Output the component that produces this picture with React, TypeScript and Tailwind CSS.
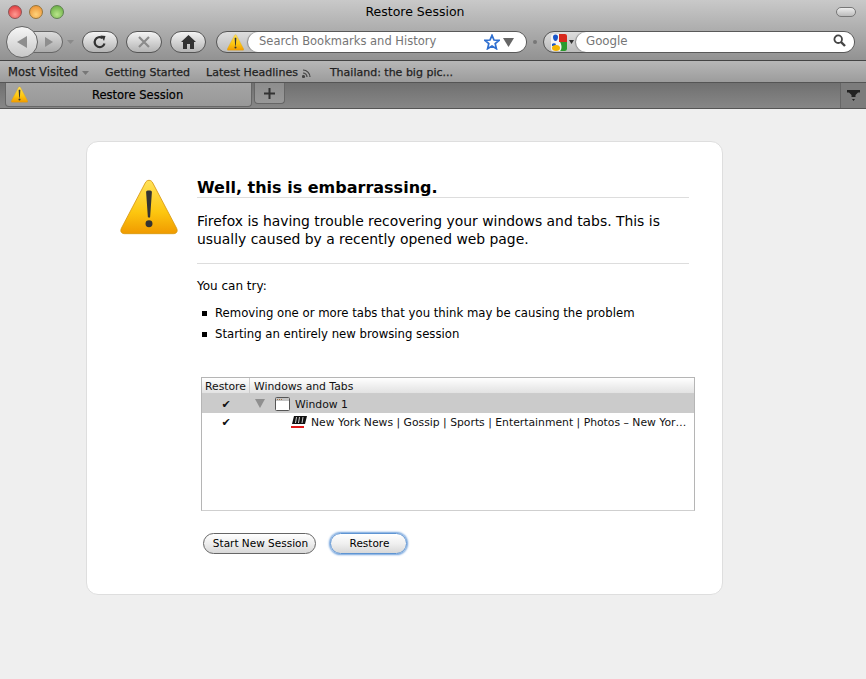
const font = "font-['DejaVu_Sans',sans-serif]";

const Warning = ({ size }: { size: number }) => (
  <svg width={size} height={size} viewBox="0 0 100 100" className="shrink-0">
    <defs>
      <linearGradient id={`warn${size}`} x1="0" y1="0" x2="0" y2="1">
        <stop offset="0" stopColor="#ffe25a" />
        <stop offset="0.6" stopColor="#fdc60f" />
        <stop offset="1" stopColor="#f09a00" />
      </linearGradient>
    </defs>
    <path
      d="M50 4c3 0 5 1.500 6.500 4.500l41 78c2.500 5 .5 9.500-5.500 9.500H8c-6 0-8-4.500-5.500-9.500l41-78C45 5.500 47 4 50 4z"
      fill={`url(#warn${size})`}
      stroke="#d99a10"
      strokeWidth="1.500"
    />
    <path d="M45 24c0-3 10-3 10 0l-3 43c0 2-4 2-4 0z" fill="#333" />
    <circle cx="50" cy="79" r="6" fill="#333" />
  </svg>
);

const ToolButton = ({ children }: { children: React.ReactNode }) => (
  <div className="flex h-[22px] w-9 items-center justify-center rounded-full border border-[#555] bg-gradient-to-b from-[#f4f4f4] to-[#b4b4b4]">
    {children}
  </div>
);

const Toolbar = () => (
  <div className="flex h-[61px] flex-col border-b border-[#444] bg-gradient-to-b from-[#c9c9c9] to-[#929292]">
    <div className="flex h-[24px] items-center pl-2 pr-[10px]">
      <div className="flex gap-[7px]">
        <span className="size-[14px] rounded-full border border-[#8c5555] bg-[radial-gradient(circle_at_50%_70%,#ff9a92,#dc2a2e)]" />
        <span className="size-[14px] rounded-full border border-[#96763c] bg-[radial-gradient(circle_at_50%_70%,#ffd27a,#e8892a)]" />
        <span className="size-[14px] rounded-full border border-[#5f8150] bg-[radial-gradient(circle_at_50%_70%,#b9e58a,#5da63a)]" />
      </div>
      <div className="flex-1 pr-[70px] pt-px text-center text-[12.500px] text-black">Restore Session</div>
      <div className="h-[10px] w-5 rounded-full border border-[#777] bg-gradient-to-b from-[#eee] to-[#bbb]" />
    </div>
    <div className="flex items-center pl-[6px] pt-[2px]">
      <div className="relative z-10 flex size-[32px] items-center justify-center rounded-full border border-[#666] bg-gradient-to-b from-[#f6f6f6] to-[#c8c8c8]">
        <svg width="14" height="14" viewBox="0 0 14 14"><path d="M2 7l10-6v12z" fill="#8e8e8e" /></svg>
      </div>
      <div className="-ml-2 flex h-[22px] w-[33px] items-center justify-center rounded-r-full border border-[#666] bg-gradient-to-b from-[#dcdcdc] to-[#aaa] pl-1">
        <svg width="10" height="10" viewBox="0 0 10 10"><path d="M1 0l8 5-8 5z" fill="#8e8e8e" /></svg>
      </div>
      <svg width="8" height="4" viewBox="0 0 8 4" className="ml-[4px] mr-[7px]"><path d="M0 0h7l-3.500 4z" fill="#8a8a8a" /></svg>
      <div className="flex gap-2">
        <ToolButton>
          <svg width="14" height="14" viewBox="0 0 14 14" fill="none">
            <path d="M11.500 8.500A5 5 0 1 1 9.500 3" stroke="#333" strokeWidth="2.200" />
            <path d="M7.500 .5l5 .5-1.500 5z" fill="#333" />
          </svg>
        </ToolButton>
        <ToolButton>
          <svg width="12" height="12" viewBox="0 0 12 12"><path d="M1 1l10 10M11 1L1 11" stroke="#8b8b8b" strokeWidth="2.200" /></svg>
        </ToolButton>
        <ToolButton>
          <svg width="15" height="14" viewBox="0 0 15 14"><path d="M7.500 0L15 7h-2v7H9V9H6v5H2V7H0z" fill="#333" /></svg>
        </ToolButton>
      </div>
      <div className="ml-[10px] flex h-[22px] w-[311px] items-center rounded-full border border-[#555] bg-gradient-to-b from-[#dedede] to-[#bcbcbc]">
        <div className="flex w-[31px] justify-end pr-[4px]"><Warning size={17} /></div>
        <div className="flex h-full flex-1 items-center rounded-full bg-white pl-[11px] pr-3 shadow-[-1px_0_1px_#888]">
          <span className="flex-1 text-[11.500px] text-[#757575]">Search Bookmarks and History</span>
          <svg width="16" height="16" viewBox="0 0 24 24" fill="#fff" stroke="#2f6fd0" strokeWidth="2.600"><path d="M12 2l3 7 7.500.6-5.700 4.900 1.800 7.500L12 18l-6.600 4 1.800-7.500L1.500 9.600 9 9z" /></svg>
          <svg width="11" height="9" viewBox="0 0 11 9" className="ml-[3px]"><path d="M0 0h11L5.500 9z" fill="#666" /></svg>
        </div>
      </div>
      <span className="mx-[6px] size-[4px] rounded-full bg-[#777]" />
      <div className="flex h-[22px] w-[312px] items-center rounded-full border border-[#555] bg-gradient-to-b from-[#dedede] to-[#bcbcbc]">
        <div className="flex w-[32px] items-center pl-[7px]">
          <svg width="16" height="17" viewBox="0 0 16 17">
            <rect width="16" height="17" rx="2" fill="#f4f4f4" />
            <path d="M2 3a2.500 2.500 0 0 1 5 0c0 2-1 4-2.500 4S2 5 2 3z" fill="#1a55c8" />
            <path d="M1 10c1-1 3-1 4 0l-1 2H1z" fill="#1a55c8" />
            <path d="M8 0h6a2 2 0 0 1 2 2v6H8z" fill="#d8281c" />
            <path d="M9 8h7v7a2 2 0 0 1-2 2H9c2-2 2-6 0-9z" fill="#2c9a2e" />
            <ellipse cx="5" cy="14" rx="4" ry="3" fill="#f4b400" />
          </svg>
          <svg width="5" height="4" viewBox="0 0 5 4" className="ml-[2px]"><path d="M0 0h5L2.500 4z" fill="#333" /></svg>
        </div>
        <div className="flex h-full flex-1 items-center rounded-full bg-white pl-[10px] pr-2 shadow-[-1px_0_1px_#888]">
          <span className="flex-1 text-[11.800px] text-[#757575]">Google</span>
          <svg width="13" height="13" viewBox="0 0 13 13" fill="none" stroke="#444" className="-mt-[3px]"><circle cx="5.200" cy="5.200" r="3.800" strokeWidth="1.800" /><path d="M8 8l4 4" strokeWidth="2.400" /></svg>
        </div>
      </div>
    </div>
  </div>
);

const BookmarksBar = () => (
  <div className="flex h-[22px] items-center border-b border-[#555] bg-gradient-to-b from-[#b7b7b7] to-[#9c9c9c] pl-2 pt-[3px] text-[11px] font-medium text-[#222]">
    <span className="flex items-center gap-1 text-[11.500px] [-webkit-text-stroke:0.25px_#222]">
      Most Visited
      <svg width="7" height="4" viewBox="0 0 7 4"><path d="M0 0h7L3.500 4z" fill="#777" /></svg>
    </span>
    <span className="ml-[16px] [-webkit-text-stroke:0.25px_#222]">Getting Started</span>
    <span className="ml-[16px] flex items-center gap-1 [-webkit-text-stroke:0.25px_#222]">
      Latest Headlines
      <svg width="9" height="9" viewBox="0 0 9 9" fill="none" stroke="#444" strokeWidth="1.200"><path d="M1 1a7 7 0 0 1 7 7M1 4a4 4 0 0 1 4 4" /><circle cx="1.500" cy="7.500" r="1" fill="#444" /></svg>
    </span>
    <span className="ml-[19px] [-webkit-text-stroke:0.25px_#222]">Thailand: the big pic...</span>
  </div>
);

const TabStrip = () => (
  <div className="flex h-[26px] border-b border-[#555] bg-gradient-to-b from-[#707070] to-[#878787]">
    <div className="ml-[5px] flex h-[24px] w-[247px] items-center rounded-b-[4px] border border-t-0 border-[#666] bg-gradient-to-b from-[#a5a5a5] to-[#989898] pl-[5px]">
      <Warning size={17} />
      <span className="ml-[64px] pt-[3px] text-[11.500px] text-black [-webkit-text-stroke:0.2px_#000]">Restore Session</span>
    </div>
    <div className="ml-[2px] flex h-[21px] w-[31px] items-center justify-center rounded-b-[4px] border border-t-0 border-[#666] bg-gradient-to-b from-[#8d8d8d] to-[#989898]">
      <svg width="11" height="11" viewBox="0 0 11 11"><path d="M5.500 0v11M0 5.500h11" stroke="#333" strokeWidth="2" /></svg>
    </div>
    <div className="ml-auto flex w-[26px] justify-center border-l border-[#666] bg-[#7c7c7c] pt-[7px]">
      <svg width="13" height="11" viewBox="0 0 13 11"><path d="M0 0h13v2.500h-2L8.500 5v2h-4V5L2 2.500H0z" fill="#222" /><path d="M5 9h3l-1.500 2z" fill="#222" /></svg>
    </div>
  </div>
);

const SessionTable = () => (
  <div className="ml-[4px] mt-[35px] h-[134px] w-[494px] border border-[#b5b5b5] border-b-[#cfcfcf] bg-white text-[10.800px] text-[#111]">
    <div className="flex h-[16px] items-center border-b border-[#ccc] bg-gradient-to-b from-[#fff] via-[#f0f0f0] to-[#e2e2e2]">
      <div className="flex h-full w-[48px] items-center border-r border-[#ccc] pl-[3px] pt-[3px]">Restore</div>
      <div className="pl-[4px] pt-[3px]">Windows and Tabs</div>
    </div>
    <div className="flex h-[19px] items-center bg-[#cbcbcb]">
      <div className="w-[48px] pt-[3px] text-center text-[11px] font-bold">✔</div>
      <svg width="10" height="9" viewBox="0 0 10 9" className="ml-[5px]"><path d="M0 0h10L5 9z" fill="#8f8f8f" /></svg>
      <svg width="15" height="14" viewBox="0 0 15 14" className="ml-[10px]">
        <rect x=".5" y=".5" width="14" height="13" rx="1" fill="#fff" stroke="#555" />
        <rect x="1" y="1" width="13" height="3" fill="#c4c4c4" />
        <path d="M2 2.500h1M4 2.500h1M6 2.500h1" stroke="#a07040" />
      </svg>
      <span className="ml-[5px] pt-[4px]">Window 1</span>
    </div>
    <div className="flex h-[17px] items-center">
      <div className="w-[48px] pt-[3px] text-center text-[11px] font-bold">✔</div>
      <svg width="16" height="13" viewBox="0 0 16 13" className="ml-[41px]">
        <path d="M3 1h13l-2 8H1z" fill="#111" />
        <path d="M5.500 2L4.500 8M8.500 2L7.500 8M12 2l-1 6" stroke="#fff" strokeWidth=".8" />
        <rect x="0" y="11" width="13" height="2" fill="#e01a1a" />
      </svg>
      <span className="ml-[4px] whitespace-nowrap pt-[4px]">New York News | Gossip | Sports | Entertainment | Photos – New Yor…</span>
    </div>
  </div>
);

export default function App() {
  return (
    <div className={`flex h-[679px] w-[866px] flex-col overflow-hidden bg-[#efefef] ${font}`}>
      <Toolbar />
      <BookmarksBar />
      <TabStrip />
      <div className="flex-1 pl-[86px] pt-[32px]">
        <div className="h-[454px] w-[637px] rounded-[12px] border border-[#dedede] bg-white pl-[33px] pt-[35px]">
          <div className="flex">
            <div className="w-[77px] pt-px"><Warning size={58} /></div>
            <div className="w-[492px] text-black">
              <h1 className="border-b border-[#ddd] pt-[2px] text-[16px] font-bold leading-[18px]">Well, this is embarrassing.</h1>
              <p className="mt-[14px] text-[13.900px] leading-[18px]">
                Firefox is having trouble recovering your windows and tabs. This is usually caused by a recently opened web page.
              </p>
              <div className="mt-[15px] border-t border-[#ddd]" />
              <p className="mt-[15px] text-[12px] leading-[15px]">You can try:</p>
              <ul className="mt-[12px] flex flex-col gap-[6px] pl-[5px] text-[11.700px] leading-[15px]">
                <li className="flex items-center gap-[8px]"><span className="size-[5px] bg-black" />Removing one or more tabs that you think may be causing the problem</li>
                <li className="flex items-center gap-[8px]"><span className="size-[5px] bg-black" />Starting an entirely new browsing session</li>
              </ul>
              <SessionTable />
              <div className="ml-[6px] mt-[22px] flex items-center gap-[14px] text-[10.500px] text-black">
                <button className="h-[21px] w-[113px] rounded-full border border-[#666] bg-gradient-to-b from-[#fff] via-[#eee] to-[#d8d8d8] pl-[2px]">Start New Session</button>
                <button className="h-[21px] w-[77px] rounded-full border border-[#5e94d2] bg-gradient-to-b from-[#fff] via-[#f0f0f0] to-[#d8d8d8] pl-[2px] shadow-[0_0_2px_1px_#6ea0dc]">Restore</button>
              </div>
            </div>
          </div>
        </div>
      </div>
    </div>
  );
}
